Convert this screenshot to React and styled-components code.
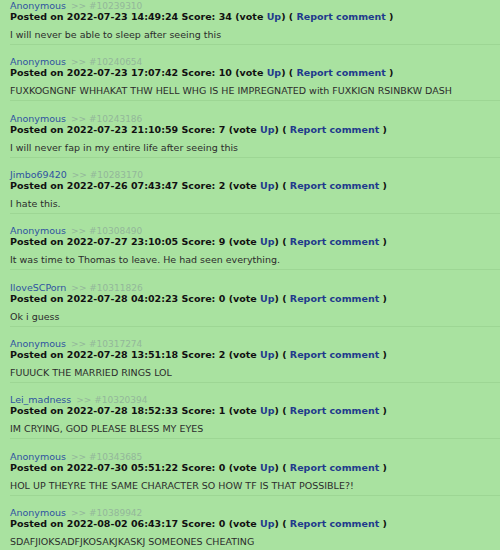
import React from "react";
import styled, { createGlobalStyle } from "styled-components";

const Global = createGlobalStyle`
  html, body { margin: 0; padding: 0; background: #a9e2a0; }
  body { font-family: "DejaVu Sans", Verdana, sans-serif; }
`;

const List = styled.div`
  display: flex;
  flex-direction: column;
  gap: 11.33px;
  padding-left: 10px;
`;

const Entry = styled.div`
  display: flex;
  flex-direction: column;
  height: 45px;
  box-sizing: border-box;
  flex-shrink: 0;
  border-bottom: 1px solid #9dd694;
`;

const NameLine = styled.div`
  height: 11px;
  font-size: 9.5px;
  line-height: 11px;
  color: #2f53a0;
  white-space: nowrap;
`;

const Ref = styled.span`
  color: #93b79a;
  font-size: 9px;
  line-height: 1;
  margin-left: 5px;
`;

const Posted = styled.div`
  height: 11px;
  font-size: 9.5px;
  line-height: 11px;
  font-weight: bold;
  color: #111;
  white-space: nowrap;
`;

const Link = styled.span`
  color: #1f3a8c;
`;

const Body = styled.div`
  height: 12px;
  margin-top: 7px;
  font-size: 9.5px;
  line-height: 12px;
  color: #2c2c2c;
  white-space: nowrap;
`;

const comments = [
  ["Anonymous", "10239310", "2022-07-23 14:49:24", 34, "I will never be able to sleep after seeing this"],
  ["Anonymous", "10240654", "2022-07-23 17:07:42", 10, "FUXKOGNGNF WHHAKAT THW HELL WHG IS HE IMPREGNATED with FUXKIGN RSINBKW DASH"],
  ["Anonymous", "10243186", "2022-07-23 21:10:59", 7, "I will never fap in my entire life after seeing this"],
  ["Jimbo69420", "10283170", "2022-07-26 07:43:47", 2, "I hate this."],
  ["Anonymous", "10308490", "2022-07-27 23:10:05", 9, "It was time to Thomas to leave. He had seen everything."],
  ["IloveSCPorn", "10311826", "2022-07-28 04:02:23", 0, "Ok i guess"],
  ["Anonymous", "10317274", "2022-07-28 13:51:18", 2, "FUUUCK THE MARRIED RINGS LOL"],
  ["Lei_madness", "10320394", "2022-07-28 18:52:33", 1, "IM CRYING, GOD PLEASE BLESS MY EYES"],
  ["Anonymous", "10343685", "2022-07-30 05:51:22", 0, "HOL UP THEYRE THE SAME CHARACTER SO HOW TF IS THAT POSSIBLE?!"],
  ["Anonymous", "10389942", "2022-08-02 06:43:17", 0, "SDAFJIOKSADFJKOSAKJKASKJ SOMEONES CHEATING"],
];

export default function App() {
  return (
    <>
      <Global />
      <List>
        {comments.map(([name, id, date, score, text]) => (
          <Entry key={id}>
            <NameLine>
              {name}
              <Ref>&gt;&gt; #{id}</Ref>
            </NameLine>
            <Posted>
              Posted on {date} Score: {score} (vote <Link>Up</Link>) ( <Link>Report comment</Link> )
            </Posted>
            <Body>{text}</Body>
          </Entry>
        ))}
      </List>
    </>
  );
}
